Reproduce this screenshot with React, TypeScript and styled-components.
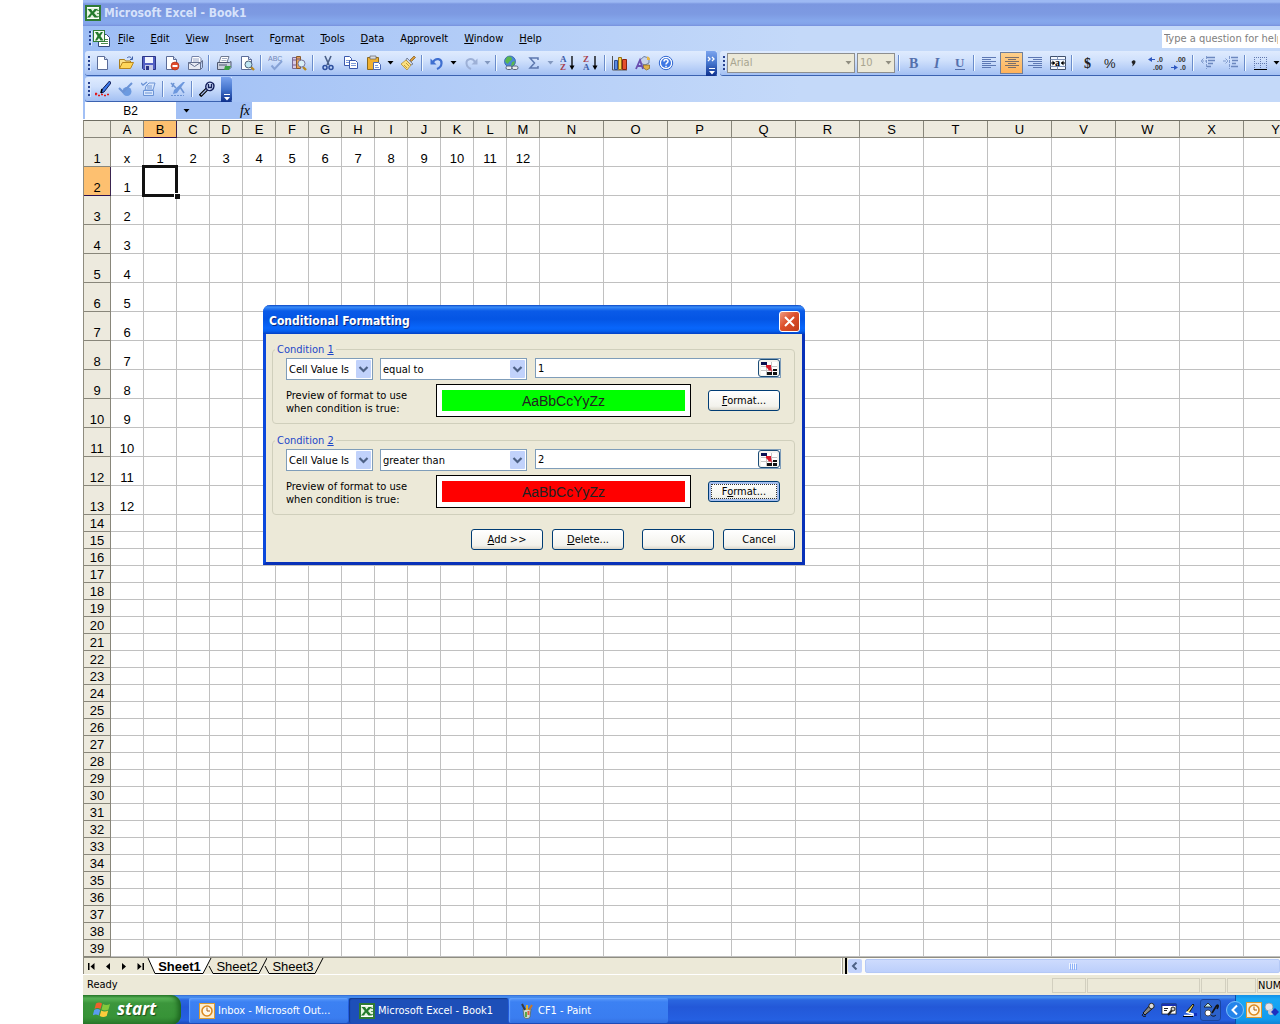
import React from "react";
import styled, { createGlobalStyle, css } from "styled-components";

const ui = `"DejaVu Sans Condensed", "Noto Sans", sans-serif`;
const arial = `"Liberation Sans", Arial, sans-serif`;

const Global = createGlobalStyle`
  *, *::before, *::after { box-sizing: border-box; }
  body { margin: 0; background: #fff; overflow: hidden; }
  button, input, select { font: inherit; color: inherit; margin: 0; border-radius: 0; }
  svg { display: block; flex: none; }
`;

const Desktop = styled.div`
  padding-left: 83px;
  overflow: hidden;
  font: 11px/14px ${ui};
  color: #000;
`;
const Win = styled.main`
  position: relative;
  display: flex;
  flex-direction: column;
`;
const TitleBar = styled.header`
  display: flex;
  align-items: center;
  gap: 3px;
  height: 26px;
  padding: 0 2px;
  background: linear-gradient(#9db9f3 0, #9db9f3 2px, #7b97e0 4px, #7d9ae2 14px, #86a8ec 21px, #83a3ea 24px, #7790dc 26px);
  color: #d6e2fb;
  font-weight: 700;
  font-size: 12px;
`;
const Bars = styled.div`
  background: linear-gradient(90deg, #9ebef5, #c4d9f9 60%);
`;
const MenuBar = styled.nav`
  display: flex;
  align-items: center;
  height: 25px;
  padding-left: 3px;
`;
const MenuItems = styled.div`
  display: flex;
  flex: 1;
`;
const MenuButton = styled.button`
  border: 0;
  background: none;
  padding: 0 8px;
  height: 22px;
  white-space: nowrap;
`;
const HelpBox = styled.input`
  width: 118px;
  height: 18px;
  border: 0;
  padding: 0 2px;
  background: #fff;
  &::placeholder { color: #808080; opacity: 1; }
`;
const Grip = styled.span`
  flex: none;
  width: 3px;
  height: 15px;
  margin: 0 0 0 3px;
  background: repeating-linear-gradient(#27418f 0 2px, transparent 2px 4px);
  border-right: 1px solid #d8e6fc;
`;
const BarRow = styled.div`
  display: flex;
  gap: 3px;
  height: 25px;
  padding-left: 2px;
  & + & { margin-top: 1px; }
`;
const Toolbar = styled.div<{ $w?: number }>`
  display: flex;
  flex: ${(p) => (p.$w ? `none` : `1 0 auto`)};
  width: ${(p) => (p.$w ? `${p.$w}px` : `auto`)};
  align-items: center;
  border-radius: 3px 0 0 3px;
  border-bottom: 1px solid #3b62b0;
  background: linear-gradient(#dfebfe, #cfe0fc 40%, #a3c0f3);
`;
const Tool = styled.button<{ $on?: boolean }>`
  display: flex;
  flex: none;
  align-items: center;
  justify-content: center;
  width: 23px;
  height: 22px;
  padding: 0;
  border: 1px solid ${(p) => (p.$on ? "#6f7f9c" : "transparent")};
  background: ${(p) => (p.$on ? "linear-gradient(#fdd08b, #ffb25a)" : "none")};
`;
const Drop = styled(Tool)`
  width: 11px;
`;
const Sep = styled.span`
  flex: none;
  width: 2px;
  height: 16px;
  margin: 0 2px;
  background: linear-gradient(90deg, #6a8ccb 50%, #f1f9ff 50%);
`;
const More = styled.button`
  display: flex;
  align-items: flex-end;
  justify-content: center;
  width: 11px;
  height: 25px;
  margin: 0 0 -1px auto;
  padding: 0;
  border: 0;
  border-radius: 0 3px 3px 0;
  background: linear-gradient(#7aa3ee, #4373cc 50%, #0d2f8c);
`;
const Combo = styled.div<{ $w: number }>`
  display: grid;
  flex: none;
  align-items: center;
  width: ${(p) => p.$w}px;
  margin: 0 1px;
  & > * { grid-area: 1 / 1; }
  & > svg { justify-self: end; margin-right: 3px; pointer-events: none; }
`;
const GreySelect = styled.select`
  appearance: none;
  width: 100%;
  height: 20px;
  padding: 0 2px;
  border: 1px solid #8e8f8f;
  background: #ece9d8;
  color: #a8a590;
  opacity: 1;
`;
const FormulaBar = styled.div`
  display: flex;
  align-items: center;
  height: 17px;
  padding-left: 2px;
  background: #a2c0f5;
`;
const NameBox = styled.input`
  width: 91px;
  height: 17px;
  border: 0;
  padding: 0;
  text-align: center;
  background: #fff;
  font: 12px/16px ${arial};
`;
const NameDrop = styled.button`
  display: flex;
  width: 20px;
  padding: 0;
  border: 0;
  background: none;
  justify-content: center;
`;
const Fx = styled.button`
  width: 56px;
  padding: 0 2px 0 0;
  border: 0;
  background: none;
  text-align: right;
  font: italic 400 14px/15px "Liberation Serif", serif;
`;
const FormulaInput = styled.input`
  flex: 1;
  min-width: 0;
  height: 17px;
  border: 0;
  background: #fff;
`;

/* ---- sheet ---- */
const SheetArea = styled.div`
  overflow: hidden;
  border-left: 1px solid #8f8c7f;
  border-top: 1px solid #6f6d62;
  margin-top: 1px;
`;
const Grid = styled.table`
  table-layout: fixed;
  width: 1224px;
  border-collapse: separate;
  border-spacing: 0;
  font: 13px/15px ${arial};
`;
const Head = styled.th<{ $hot?: boolean }>`
  height: 17px;
  padding: 0;
  font-weight: 400;
  background: ${(p) => (p.$hot ? "#fdc070" : "#edeade")};
  border-right: 1px solid ${(p) => (p.$hot ? "#3a2450" : "#88867a")};
  border-bottom: 1px solid ${(p) => (p.$hot ? "#2a1050" : "#88867a")};
`;
const RowHead = styled(Head)<{ $tall?: boolean }>`
  height: ${(p) => (p.$tall ? 29 : 17)}px;
  vertical-align: bottom;
`;
const Cell = styled.td<{ $active?: boolean }>`
  padding: 0;
  text-align: center;
  vertical-align: bottom;
  border-right: 1px solid #c0c0c0;
  border-bottom: 1px solid #c0c0c0;
  ${(p) =>
    p.$active &&
    css`
      position: relative;
      &::before {
        content: "";
        position: absolute;
        inset: -2px;
        border: 3px double #111;
        background: linear-gradient(#444, #444) border-box;
        background-clip: border-box;
        border-style: solid;
        background: none;
      }
      &::after {
        content: "";
        position: absolute;
        right: -4px;
        bottom: -4px;
        width: 6px;
        height: 6px;
        background: #111;
        border-left: 1px solid #fff;
        border-top: 1px solid #fff;
      }
    `}
`;

const SheetBar = styled.div`
  display: flex;
  height: 18px;
  border-top: 1px solid #8f8d81;
  border-bottom: 1px solid #fff;
  background: #ece9d8;
`;
const TabsPane = styled.div`
  display: flex;
  flex: none;
  width: 759px;
  align-items: center;
  border-left: 1px solid #8f8c7f;
  border-right: 1px solid #fff;
`;
const NavButton = styled.button`
  display: flex;
  justify-content: center;
  width: 16px;
  padding: 0;
  border: 0;
  background: none;
`;
const Tabs = styled.div`
  display: flex;
  margin-left: 5px;
`;
const Tab = styled.button<{ $on?: boolean }>`
  height: 16px;
  margin-left: -6px;
  width: ${(p) => (p.$on ? 65 : 62)}px;
  padding: 0;
  border: 0;
  display: grid;
  align-items: center;
  justify-items: center;
  background: none;
  font: ${(p) => (p.$on ? 700 : 400)} 13px/15px ${arial};
  position: relative;
  z-index: ${(p) => (p.$on ? 1 : 0)};
  & > * { grid-area: 1 / 1; }
  & > svg { justify-self: stretch; }
  & > span { z-index: 1; }
`;
const Splitter = styled.span`
  flex: none;
  width: 5px;
  border-left: 1px solid #a09e90;
  border-right: 2px solid #000;
  margin-right: 1px;
`;
const ScrollTrack = styled.div`
  display: flex;
  flex: 1;
  gap: 3px;
  min-width: 0;
  padding: 1px 0;
  background: #fbfbf8;
`;
const ScrollButton = styled.button`
  display: flex;
  flex: none;
  align-items: center;
  justify-content: center;
  width: 14px;
  height: 14px;
  padding: 0;
  border: 0;
  border-radius: 2px;
  background: #c3d3fb;
`;
const Thumb = styled.div`
  display: flex;
  flex: 1;
  align-items: center;
  justify-content: center;
  border: 1px solid #b4c8f6;
  border-radius: 2px;
  background: linear-gradient(#cddbfd, #bccffb);
`;
const StatusBar = styled.footer`
  display: flex;
  align-items: center;
  height: 20px;
  padding-left: 4px;
  background: #ece9d8;
`;
const Ready = styled.span`
  flex: 1;
`;
const StatusBox = styled.span<{ $w: number }>`
  flex: none;
  width: ${(p) => p.$w}px;
  height: 15px;
  margin-right: 1px;
  border: 1px solid #d2cfbf;
  white-space: nowrap;
  &:last-child { margin-right: 0; border-width: 1px 0 1px 1px; }
`;

const TaskBar = styled.div`
  display: flex;
  align-items: stretch;
  height: 30px;
  background: linear-gradient(#3168d5 0, #4b93f0 2px, #2a66e0 5px, #2358d8 12px, #2560e2 25px, #1941a5 30px);
  color: #fff;
`;
const Start = styled.button`
  display: flex;
  align-items: center;
  gap: 5px;
  width: 98px;
  margin-right: 8px;
  padding: 0 0 2px 10px;
  border: 0;
  border-radius: 0 10px 10px 0;
  background: linear-gradient(#2f8a33, #5cb85a 3px, #3c963c 8px, #379337 22px, #2b7a2d);
  box-shadow: inset -3px 0 5px #1d641f;
  font: italic 700 17px/20px "Open Sans", sans-serif;
  color: #fff;
  text-shadow: 1px 1px 1px #1c4f1c;
`;
const Task = styled.button<{ $on?: boolean }>`
  display: flex;
  align-items: center;
  gap: 3px;
  width: 159px;
  height: 25px;
  margin: 3px 1px 0 0;
  padding: 0 10px;
  border: 0;
  border-radius: 2px;
  color: #fff;
  white-space: nowrap;
  background: ${(p) => (p.$on ? "#1d4fb8" : "linear-gradient(#5a9bfb, #3c81f3 4px, #3a7df0 20px, #3370e0)")};
  box-shadow: inset 1px 1px 1px ${(p) => (p.$on ? "#123a90" : "#63a0fb")};
`;
const Lang = styled.div`
  display: flex;
  align-items: center;
  margin-left: auto;
`;
const LangButton = styled.button<{ $on?: boolean }>`
  display: flex;
  align-items: center;
  justify-content: center;
  width: 21px;
  height: 22px;
  padding: 0;
  border: ${(p) => (p.$on ? "1px solid #1a45a0" : "0")};
  border-radius: 3px;
  background: ${(p) => (p.$on ? "#2c62cc" : "none")};
`;
const Tray = styled.div`
  display: flex;
  align-items: center;
  gap: 2px;
  width: 45px;
  margin-left: 14px;
  background: linear-gradient(#1290e8, #19a8f5 4px, #129bee 24px, #0f7fd0);
  border-left: 1px solid #0a4ea8;
`;
const TrayButton = styled.button`
  display: flex;
  flex: none;
  padding: 0;
  border: 0;
  background: none;
  &:first-child { margin-left: -10px; }
`;

/* ---- dialog ---- */
const Dialog = styled.section`
  position: absolute;
  left: 180px;
  top: 305px;
  width: 542px;
  border: 3px solid #0a48dc;
  border-top: 0;
  border-right-color: #0831b8;
  border-bottom-color: #0831b8;
  border-radius: 7px 7px 0 0;
  background: #ece9d8;
`;
const DialogTitle = styled.div`
  display: flex;
  align-items: center;
  justify-content: space-between;
  height: 29px;
  margin: 0 -3px;
  padding: 3px 5px 0 6px;
  border-radius: 7px 7px 0 0;
  background: linear-gradient(#0a45c4 0, #3a8cf8 2px, #0a5be8 6px, #0455e4 14px, #0866fb 23px, #0560f0 26px, #0340c4 29px);
  color: #fff;
  font: 700 12px/16px ${ui};
  text-shadow: 1px 1px 0 #0a2a80;
`;
const Close = styled.button`
  display: flex;
  align-items: center;
  justify-content: center;
  width: 21px;
  height: 21px;
  padding: 0;
  border: 1px solid #fff;
  border-radius: 3px;
  background: linear-gradient(135deg, #ee9a80, #dd4f2c 45%, #c03c18);
`;
const DialogBody = styled.form`
  display: flex;
  flex-direction: column;
  gap: 9px;
  padding: 8px 7px 12px 6px;
`;
const Group = styled.fieldset`
  min-width: 0;
  height: 82px;
  margin: 0;
  padding: 0 13px 0 13px;
  border: 1px solid #d0cfbc;
  border-radius: 4px;
`;
const Legend = styled.legend`
  margin-left: -11px;
  padding: 1px 2px 0;
  height: 14px;
  color: #1c46c8;
`;
const Line = styled.div`
  display: flex;
  align-items: flex-start;
  padding-top: 2px;
`;
const PickWrap = styled.div<{ $w: number }>`
  display: grid;
  flex: none;
  width: ${(p) => p.$w}px;
  margin-right: 7px;
  align-items: center;
  & > * { grid-area: 1 / 1; }
  & > svg { justify-self: end; margin-right: 2px; pointer-events: none; }
`;
const Pick = styled.select`
  appearance: none;
  width: 100%;
  height: 22px;
  padding: 2px 2px 0;
  border: 1px solid #7f9db9;
  background: #fff;
`;
const RefWrap = styled.div`
  display: flex;
  flex: 1;
  height: 20px;
  margin-left: 1px;
  border: 1px solid #7f9db9;
  background: #fff;
`;
const RefInput = styled.input`
  flex: 1;
  min-width: 0;
  border: 0;
  padding: 2px 2px 0;
  background: none;
  outline: 0;
`;
const RefButton = styled.button`
  display: flex;
  align-items: center;
  justify-content: center;
  width: 22px;
  height: 18px;
  padding: 0;
  border: 1px solid #1c4d78;
  border-radius: 3px;
  background: #f4f3ee;
`;
const PreviewLine = styled.div`
  display: flex;
  align-items: center;
  padding-top: 4px;
`;
const PreviewLabel = styled.p`
  width: 150px;
  margin: 0;
  padding-top: 2px;
  line-height: 13px;
`;
const PreviewBox = styled.div`
  width: 255px;
  height: 33px;
  padding: 5px;
  border: 1px solid #000;
  background: #fff;
`;
const Swatch = styled.div<{ $c: string }>`
  height: 21px;
  text-align: center;
  background: ${(p) => p.$c};
  color: #222;
  font: 14px/22px ${arial};
`;
const Push = styled.button<{ $focus?: boolean }>`
  width: 72px;
  height: 21px;
  padding: 1px 0 0;
  border: 1px solid #003c74;
  border-radius: 3px;
  background: linear-gradient(#fff, #f3f2ec 80%, #dcd8cc);
  ${(p) =>
    p.$focus &&
    css`
      box-shadow: inset 0 0 0 2px #a4bdee;
      outline: 1px dotted #333;
      outline-offset: -4px;
    `}
`;
const PushRight = styled(Push)`
  margin: 0 1px 0 auto;
`;
const Actions = styled.div`
  display: flex;
  justify-content: flex-end;
  gap: 9px;
  padding-top: 5px;
`;
const Confirm = styled(Push)`
  margin-left: 9px;
`;

/* ---- icons ---- */
const I = ({ children, w = 16, h = 16 }: { children: React.ReactNode; w?: number; h?: number }) => (
  <svg width={w} height={h} viewBox={`0 0 ${w} ${h}`} aria-hidden="true">{children}</svg>
);
const Down = ({ c = "#000" }: { c?: string }) => <I w={7} h={4}><path d="M0.500 0h6L3.500 3.500z" fill={c} /></I>;

const ExcelIcon = () => (
  <I>
    <rect x="1" y="1" width="14" height="14" fill="#fff" stroke="#2f7a35" strokeWidth="2" />
    <path d="M10 3h4v10h-4z" fill="#dff0dc" /><path d="M11 5.500h3M11 8.500h3M11 11.500h3" stroke="#5a9a5a" />
    <path d="M2 3h10v10H2z" fill="#e6f4e2" />
    <path d="M2.500 4h3.500l1.500 2.500L9.500 4H13L9 8l4 4.500H9.500L7 9.500 5 12.500H2L5.800 8z" fill="#237a2c" />
  </I>
);
const DocExcel = () => (
  <I w={18} h={17}>
    <path d="M6.500 4.500h8l3 3v9h-11z" fill="#fff" stroke="#33487c" />
    <path d="M12 9.500h4M12 11.500h4M9 13.500h7" stroke="#4c8b4c" />
    <rect x="1.500" y=".5" width="11" height="11" fill="#f2faef" stroke="#2f7a35" />
    <path d="M3 2h3l1 2 2-2h2L8.500 6l3 4.500h-3L7 8l-2 2.500H3L5.500 6z" fill="#237a2c" />
  </I>
);
const page = <path d="M2.500 1.500h7l3 3v10h-10z" fill="#fff" stroke="#5b6c98" />;
const fold = <path d="M9.500 1.500v3h3" fill="#d5e0f5" stroke="#5b6c98" />;
const lens = (
  <>
    <path d="M12 12l3 3" stroke="#b88a20" strokeWidth="2.400" />
    <circle cx="9.500" cy="9.500" r="3.500" fill="#bfe6f2" stroke="#4c5f74" />
  </>
);

const icons: Record<string, React.ReactNode> = {
  New: <I>{page}{fold}</I>,
  Open: <I><path d="M1.500 13.500v-9h5l1 1.500h5v2" fill="#fbe08a" stroke="#a97d1c" /><path d="M1.500 13.500l3-6h11l-3 6z" fill="#ffd65a" stroke="#b8861f" /><path d="M9 3c2-2 4-1 5 1M14.500 1.500V4.500H12" fill="none" stroke="#3c5fa8" /></I>,
  Save: <I><path d="M1.500 1.500h13v13h-12l-1-1z" fill="#5360c4" stroke="#2b3688" /><path d="M4 2h8v6H4z" fill="#f2f5ff" /><path d="M4 10h8v5H4z" fill="#c7cbe8" /><path d="M5 11h3v4H5z" fill="#2b3688" /></I>,
  Permission: <I>{page}{fold}<circle cx="11" cy="11" r="4" fill="#df4a2c" stroke="#a8280f" strokeWidth=".6" /><path d="M8.500 11h5" stroke="#fff" strokeWidth="2" /></I>,
  "E-mail": <I><path d="M5 1.500h7l2 2v5H4z" fill="#fff" stroke="#7482a8" /><path d="M6 4h6M6 6h6" stroke="#9aa7c8" /><path d="M1.500 7.500h12v7h-12z" fill="#e8ebf3" stroke="#64708f" /><path d="M1.500 7.500l6 4 6-4M13.500 7.500l2-2v7l-2 2" fill="none" stroke="#64708f" /></I>,
  Print: <I><path d="M5 1.500h8l-2 6H3z" fill="#fff" stroke="#6f7a90" /><path d="M1.500 7.500h12l1.500-1v6l-2 2H1.500z" fill="#c9cfdc" stroke="#4e5870" /><path d="M6 3.500h5M5.500 5.500h5" stroke="#a5afc4" /><path d="M3 10h8" stroke="#4e5870" /><path d="M9 11h6l-2 4H8z" fill="#3ca044" /></I>,
  "Print Preview": <I>{page}{fold}{lens}</I>,
  Spelling: <I><text x="0" y="6" fontSize="7" fontFamily="Liberation Sans" fill="#6f86b8">ABC</text><path d="M3.500 10.500l3 3.500L14 6" fill="none" stroke="#86a2d6" strokeWidth="2" /></I>,
  Research: <I><path d="M1.500 2.500h4v11h-4z" fill="#d8c9e4" stroke="#786a95" /><path d="M5.500 1.500h4v12h-4z" fill="#e7a05a" stroke="#8a5a2c" /><path d="M2 5h3M2 10h3M6 4h3" stroke="#705a90" /><path d="M12 12l3 3" stroke="#b88a20" strokeWidth="2.400" /><circle cx="10.500" cy="8.500" r="3.500" fill="#d9eef6" stroke="#76749a" /></I>,
  Cut: <I><path d="M5 1l4 9M11 1L7 10" stroke="#4a5f86" strokeWidth="1.600" fill="none" /><circle cx="5" cy="12.500" r="2" fill="none" stroke="#2d4f9e" strokeWidth="1.500" /><circle cx="11" cy="12.500" r="2" fill="none" stroke="#2d4f9e" strokeWidth="1.500" /></I>,
  Copy: <I><path d="M1.500 1.500h5l2 2v7h-7z" fill="#fff" stroke="#3a58ac" /><path d="M3 5.500h4M3 7.500h4" stroke="#7e9ad8" /><path d="M6.500 5.500h6l2 2v6h-8z" fill="#fff" stroke="#3a58ac" /><path d="M8 8.500h5M8 10.500h5" stroke="#7e9ad8" /></I>,
  Paste: <I><path d="M1.500 2.500h11v12h-11z" fill="#f0b030" stroke="#8c6a20" /><path d="M4 1h6v3H4z" fill="#d8dbe2" stroke="#666" strokeWidth=".7" /><path d="M7.500 7.500h5l2 2v5h-7z" fill="#fff" stroke="#4a68b4" /><path d="M9 10.500h3M9 12.500h4" stroke="#7e9ad8" /></I>,
  "Format Painter": <I><path d="M10 5l4-4 1.500 1.500-4 4z" fill="#d99b3a" stroke="#805a20" strokeWidth=".7" /><path d="M7 3l6 6-2 1-5-5z" fill="#cfd5e2" stroke="#56617a" strokeWidth=".7" /><path d="M6 5l5 5-4 5-6-6z" fill="#fce07e" stroke="#a98427" strokeWidth=".7" /><path d="M4 10l3 3M6 8l3 3" stroke="#c09a3a" /></I>,
  Undo: <I><path d="M4 7c3-5 9-3 8.500 1.500C12.300 11 10.500 13 8 14" fill="none" stroke="#3f6fd0" strokeWidth="2.200" /><path d="M1.500 3.500v6h6z" fill="#3f6fd0" /></I>,
  Redo: <I><path d="M12 7c-3-5-9-3-8.500 1.500C3.700 11 5.500 13 8 14" fill="none" stroke="#9db0d6" strokeWidth="2" /><path d="M14.500 3.500v6h-6z" fill="#9db0d6" /></I>,
  Hyperlink: <I><circle cx="7" cy="6.500" r="5.500" fill="#4a86d8" stroke="#2a5a9c" strokeWidth=".7" /><path d="M4 2c3-1 5 0 5 2S6 6 5.500 8 3 8 2 6zM9 7l3-1-1 4-3 1z" fill="#59b84e" /><rect x="3" y="11" width="6" height="3.500" rx="1.700" fill="#e8ecf2" stroke="#58657c" /><rect x="9" y="11" width="6" height="3.500" rx="1.700" fill="#e8ecf2" stroke="#58657c" /></I>,
  AutoSum: <I><path d="M12 5V3H4l4.500 5L4 13h8v-2" fill="none" stroke="#5d78ae" strokeWidth="1.500" /></I>,
  "Sort Ascending": <I><text x="0" y="7" fontSize="9" fontWeight="700" fontFamily="Liberation Serif" fill="#3c5ca8">A</text><text x="0" y="15" fontSize="9" fontWeight="700" fontFamily="Liberation Serif" fill="#a8404c">Z</text><path d="M12 1v12" stroke="#000" strokeWidth="1.300" /><path d="M9.500 10.500h5L12 15z" /></I>,
  "Sort Descending": <I><text x="0" y="7" fontSize="9" fontWeight="700" fontFamily="Liberation Serif" fill="#a8404c">Z</text><text x="0" y="15" fontSize="9" fontWeight="700" fontFamily="Liberation Serif" fill="#3c5ca8">A</text><path d="M12 1v12" stroke="#000" strokeWidth="1.300" /><path d="M9.500 10.500h5L12 15z" /></I>,
  "Chart Wizard": <I><path d="M.5 1v14H15" fill="none" stroke="#555" /><path d="M2.500 5.500h3v9h-3z" fill="#5b8be0" stroke="#2c4c94" /><path d="M6.500 2.500h3v12h-3z" fill="#fbd34c" stroke="#94701a" /><path d="M10.500 4.500h4v10h-4z" fill="#e4502c" stroke="#8a2410" /></I>,
  Drawing: <I><path d="M5 5l4-3.500L14 3v5l-4 2-5-2z" fill="#c6d2ea" stroke="#57688e" strokeWidth=".8" /><path d="M12 1.500c2 0 3 1.500 3 3.500h-3z" fill="#e8b944" /><path d="M8.500 10h6v3.500l-3 1.500-3-2z" fill="#e0b048" stroke="#856215" strokeWidth=".7" /><path d="M1 14L5 5l3 9M2.500 11H7" fill="none" stroke="#6a4fb0" strokeWidth="1.800" /></I>,
  Help: <I><circle cx="8" cy="8" r="6.700" fill="#fff" stroke="#2f66d0" /><circle cx="8" cy="8" r="5" fill="#3f78e4" /><path d="M6 6.500C6 4 10 4 10 6.300 10 8 8 7.800 8 9.500M8 10.800v1.400" fill="none" stroke="#fff" strokeWidth="1.500" /></I>,
  Bold: <I><text x="3" y="13" fontSize="14" fontWeight="700" fontFamily="Liberation Serif" fill="#5470ac">B</text></I>,
  Italic: <I><text x="5" y="13" fontSize="14" fontStyle="italic" fontWeight="700" fontFamily="Liberation Serif" fill="#5470ac">I</text></I>,
  Underline: <I><text x="3" y="12" fontSize="13" fontWeight="700" fontFamily="Liberation Serif" fill="#5470ac">U</text><path d="M3 14.500h10" stroke="#5470ac" /></I>,
  "Align Left": <I><path d="M1 2.500h14M1 4.500h9M1 6.500h14M1 8.500h9M1 10.500h14M1 12.500h9" stroke="#5d78b4" /></I>,
  Center: <I><path d="M1 2.500h14M4 4.500h8M1 6.500h14M4 8.500h8M1 10.500h14M4 12.500h8" stroke="#7b6f6b" /></I>,
  "Align Right": <I><path d="M1 2.500h14M6 4.500h9M1 6.500h14M6 8.500h9M1 10.500h14M6 12.500h9" stroke="#5d78b4" /></I>,
  "Merge and Center": <I><path d="M.5 1.500h15v13H.5z" fill="#f4f8ff" stroke="#40506c" /><path d="M.5 4.500h15M.5 11.500h15M7.500 1.500v3M7.500 11.500v3" stroke="#8093b8" /><path d="M1 8h4M11 8h4" stroke="#000" /><path d="M2.500 5.500L5 8l-2.500 2.500zM13.500 5.500L11 8l2.500 2.500z" /><text x="5" y="11" fontSize="10" fontWeight="700" fontFamily="Liberation Serif">a</text></I>,
  Currency: <I><text x="5" y="13" fontSize="14" fontWeight="700" fontFamily="Liberation Serif" fill="#222">$</text></I>,
  Percent: <I><text x="2" y="13" fontSize="13" fontFamily="Liberation Sans" fill="#222">%</text></I>,
  Comma: <I><path d="M8 5.500c3-1 4 3-1 6 1-2 1-2.500 0-3.500s0-2.200 1-2.500z" fill="#222" /></I>,
  "Increase Decimal": <I><text x="9" y="7" fontSize="7" fontWeight="700" fontFamily="Liberation Sans" fill="#333">.0</text><text x="5" y="15" fontSize="7" fontWeight="700" fontFamily="Liberation Sans" fill="#333">.00</text><path d="M2 4.500h5" stroke="#2f58c0" /><path d="M0 4.500L4 2v5z" fill="#2f58c0" /></I>,
  "Decrease Decimal": <I><text x="5" y="7" fontSize="7" fontWeight="700" fontFamily="Liberation Sans" fill="#333">.00</text><text x="9" y="15" fontSize="7" fontWeight="700" fontFamily="Liberation Sans" fill="#333">.0</text><path d="M0 12.500h5" stroke="#2f58c0" /><path d="M7 12.500L3 10v5z" fill="#2f58c0" /></I>,
  "Decrease Indent": <I><path d="M7 2.500h8M8 5.500h7M8 8.500h5M7 11.500h4" stroke="#6c88bf" strokeWidth="1.500" /><path d="M1 6h5M3.500 3.500L1 6l2.500 2.500M6.500 1v13" stroke="#7f99cc" fill="none" strokeDasharray="3 1" /></I>,
  "Increase Indent": <I><path d="M8 2.500h7M9 5.500h6M9 8.500h4M8 11.500h7" stroke="#6c88bf" strokeWidth="1.500" /><path d="M0 6h5M2.500 3.500L5 6 2.500 8.500M6.500 1v13" stroke="#7f99cc" fill="none" strokeDasharray="3 1" /></I>,
  Borders: <I><path d="M2.500 2v11M8.500 2v11M14.500 2v11M2 2.500h13M2 8.500h13" stroke="#6279ad" strokeDasharray="1 1" /><path d="M2 14.500h13" stroke="#000" /></I>,
  Sign: <I><path d="M14.500 0l1.500 2-7 9-3 1 1-3.500z" fill="#3b78e8" stroke="#101c58" /><path d="M6 12l1-4" stroke="#000" strokeWidth="1.600" /><path d="M0 12l2 2M2 12l-2 2M3 14.500h2m1-1h2m1 1h2m1-1h2" stroke="#e01818" strokeWidth="1.300" /></I>,
  Approve: <I><circle cx="9" cy="10.500" r="4.500" fill="#6c9ae0" /><path d="M1 7l4 4 9-9" fill="none" stroke="#6c94d6" strokeWidth="2" /></I>,
  "Approve List": <I><path d="M5 5l3-3h6l-2 7H4zM2.500 9.500h10v5h-10zM6 5h5M6 7h5M4 12h7" fill="#d8e6fc" stroke="#6c94d6" /><path d="M0 2l2 2 4-3" fill="none" stroke="#6c94d6" strokeWidth="1.400" /></I>,
  "Remove Signature": <I><path d="M15 1L7 12l-4 1 1-4L13 1z" fill="#6d98de" /><path d="M1 2l5 5M4 2l-2 4M10 6l4 6" stroke="#6d94d4" strokeWidth="1.600" /><path d="M1 14.500h13" stroke="#6d94d4" strokeDasharray="2 1" /></I>,
  Setup: <I><path d="M1 15l7-7" stroke="#000" strokeWidth="3.400" /><path d="M2 14l6-6" stroke="#9fb6e8" strokeWidth="1.200" /><path d="M8 2.500C10 0 15 1 15 5s-4 5.500-6.500 4S6.500 4 8 2.500zM9.500 3v3.500h3V3" fill="#cfdcfa" stroke="#14205c" strokeWidth="1.400" /></I>,
};

const standard = ["New", "Open", "Save", "Permission", "E-mail", "|", "Print", "Print Preview", "|", "Spelling", "Research", "|", "Cut", "Copy", "Paste", "v", "Format Painter", "|", "Undo", "v", "Redo", "x", "|", "Hyperlink", "AutoSum", "x", "Sort Ascending", "Sort Descending", "|", "Chart Wizard", "Drawing", "Help"];
const formatting = ["|", "Bold", "Italic", "Underline", "|", "Align Left", "Center", "Align Right", "Merge and Center", "|", "Currency", "Percent", "Comma", "Increase Decimal", "Decrease Decimal", "|", "Decrease Indent", "Increase Indent", "|", "Borders", "v"];
const approve = ["Sign", "Approve", "Approve List", "|", "Remove Signature", "|", "Setup"];

const Tools = ({ items }: { items: string[] }) => (
  <>
    {items.map((n, i) =>
      n === "|" ? <Sep key={i} /> :
      n === "v" || n === "x" ? <Drop key={i} aria-label={`${items[i - 1]} options`}><Down c={n === "v" ? "#000" : "#8398bf"} /></Drop> :
      <Tool key={i} aria-label={n} $on={n === "Center"}>{icons[n]}</Tool>
    )}
  </>
);

const MoreIcon = ({ chevrons }: { chevrons?: boolean }) => (
  <I w={9} h={21}>
    {chevrons && <path d="M1 2l2 2-2 2M5 2l2 2-2 2" fill="none" stroke="#fff" strokeWidth="1.300" />}
    <path d="M2 13.500h6" stroke="#fff" /><path d="M2 16h6l-3 3.500z" fill="#fff" />
  </I>
);

const menus = [["", "F", "ile"], ["", "E", "dit"], ["", "V", "iew"], ["", "I", "nsert"], ["F", "o", "rmat"], ["", "T", "ools"], ["", "D", "ata"], ["A", "p", "proveIt"], ["", "W", "indow"], ["", "H", "elp"]];
const columns = "ABCDEFGHIJKLMNOPQRSTUVWXY".split("");
const rows = Array.from({ length: 39 }, (_, i) => i + 1);

const cellText = (row: number, col: number) => {
  if (row === 1 && col === 0) return "x";
  if (row === 1 && col <= 12) return String(col);
  if (col === 0 && row >= 2 && row <= 13) return String(row - 1);
  return null;
};

const PickArrow = () => (
  <I w={15} h={18}>
    <rect width="15" height="18" rx="1" fill="#c1d2fb" /><path d="M3.500 7l4 4 4-4" fill="none" stroke="#4d6185" strokeWidth="2.200" />
  </I>
);

const RefIcon = () => (
  <I w={16} h={13}>
    <rect width="16" height="13" fill="#fff" /><path d="M0 4.500h16M0 8.500h16M5.500 0v13M10.500 0v13" stroke="#c4c4c4" />
    <path d="M0 0h6v3H0z" fill="#0a1050" /><path d="M6 10h5v3H6zM12 7h4v2h-4zM12 10h4v3h-4z" fill="#111" />
    <path d="M5 3h5v1.500l1 5.500-2-2-1 1-1-2-2-2z" fill="#d81a2c" />
  </I>
);

function Condition({ n, op, value, color, focus }: { n: number; op: string; value: string; color: string; focus?: boolean }) {
  return (
    <Group>
      <Legend>Condition <u>{n}</u></Legend>
      <Line>
        <PickWrap $w={87}>
          <Pick aria-label={`Condition ${n} source`}><option>Cell Value Is</option></Pick>
          <PickArrow />
        </PickWrap>
        <PickWrap $w={147}>
          <Pick aria-label={`Condition ${n} comparison`}><option>{op}</option></Pick>
          <PickArrow />
        </PickWrap>
        <RefWrap>
          <RefInput aria-label={`Condition ${n} value`} defaultValue={value} />
          <RefButton type="button" aria-label="Collapse dialog"><RefIcon /></RefButton>
        </RefWrap>
      </Line>
      <PreviewLine>
        <PreviewLabel>Preview of format to use<br />when condition is true:</PreviewLabel>
        <PreviewBox><Swatch $c={color}>AaBbCcYyZz</Swatch></PreviewBox>
        <PushRight type="button" $focus={focus}>{focus ? <>F<u>o</u>rmat...</> : <><u>F</u>ormat...</>}</PushRight>
      </PreviewLine>
    </Group>
  );
}

const tabs = ["Sheet1", "Sheet2", "Sheet3"];

const Clock = () => (
  <I><rect x=".5" y=".5" width="15" height="15" fill="#fdeccb" stroke="#d89a34" /><circle cx="8" cy="8" r="5" fill="#fff8e8" stroke="#dc8a20" strokeWidth="1.600" /><path d="M8 4.500V8h3" fill="none" stroke="#a85a10" /></I>
);

export default function App() {
  return (
    <Desktop>
      <Global />
      <Win>
        <TitleBar><ExcelIcon />Microsoft Excel - Book1</TitleBar>
        <Bars>
          <MenuBar>
            <Grip />
            <DocExcel />
            <MenuItems>
              {menus.map(([a, b, c]) => <MenuButton key={a + b + c}>{a}<u>{b}</u>{c}</MenuButton>)}
            </MenuItems>
            <HelpBox aria-label="Type a question for help" placeholder="Type a question for help" />
          </MenuBar>
          <BarRow>
            <Toolbar $w={632}>
              <Grip />
              <Tools items={standard} />
              <More aria-label="Toolbar options"><MoreIcon chevrons /></More>
            </Toolbar>
            <Toolbar>
              <Grip />
              <Combo $w={128}><GreySelect disabled aria-label="Font"><option>Arial</option></GreySelect><Down c="#908e80" /></Combo>
              <Combo $w={38}><GreySelect disabled aria-label="Font size"><option>10</option></GreySelect><Down c="#908e80" /></Combo>
              <Tools items={formatting} />
            </Toolbar>
          </BarRow>
          <BarRow>
            <Toolbar $w={147}>
              <Grip />
              <Tools items={approve} />
              <More aria-label="Toolbar options"><MoreIcon /></More>
            </Toolbar>
          </BarRow>
        </Bars>
        <FormulaBar>
          <NameBox aria-label="Name box" defaultValue="B2" />
          <NameDrop aria-label="Names"><Down /></NameDrop>
          <Fx>fx</Fx>
          <FormulaInput aria-label="Formula" />
        </FormulaBar>
        <SheetArea>
          <Grid>
            <colgroup>
              <col style={{ width: 27 }} />
              {columns.map((c, i) => <col key={c} style={{ width: i < 13 ? 33 : 64 }} />)}
            </colgroup>
            <thead>
              <tr><Head />{columns.map((c) => <Head key={c} scope="col" $hot={c === "B"}>{c}</Head>)}</tr>
            </thead>
            <tbody>
              {rows.map((r) => (
                <tr key={r}>
                  <RowHead scope="row" $hot={r === 2} $tall={r <= 13}>{r}</RowHead>
                  {columns.map((c, i) => <Cell key={c} $active={r === 2 && c === "B"}>{cellText(r, i)}</Cell>)}
                </tr>
              ))}
            </tbody>
          </Grid>
        </SheetArea>
        <SheetBar>
          <TabsPane>
            <NavButton aria-label="First sheet"><I w={8} h={7}><path d="M0 0h1.500v7H0zM6.500 0v7L2.500 3.500z" /></I></NavButton>
            <NavButton aria-label="Previous sheet"><I w={8} h={7}><path d="M6 0v7L2 3.500z" /></I></NavButton>
            <NavButton aria-label="Next sheet"><I w={8} h={7}><path d="M2 0v7l4-3.500z" /></I></NavButton>
            <NavButton aria-label="Last sheet"><I w={8} h={7}><path d="M6.500 0H8v7H6.500zM1.500 0v7l4-3.500z" /></I></NavButton>
            <Tabs>
              {tabs.map((t, i) => (
                <Tab key={t} $on={i === 0}>
                  <I w={i === 0 ? 65 : 62} h={16}>
                    <path d={i === 0 ? "M1 0l7 15.500h48L64 0z" : "M5 0l5 15.500h44L62 0z"} fill={i === 0 ? "#fff" : "#ece9d8"} />
                    <path d={i === 0 ? "M1 0l7 15.500h48L64 0" : "M3 8l4 7.500h46L61 0"} fill="none" stroke="#000" />
                  </I>
                  <span>{t}</span>
                </Tab>
              ))}
            </Tabs>
          </TabsPane>
          <Splitter />
          <ScrollTrack>
            <ScrollButton aria-label="Scroll left"><I w={8} h={8}><path d="M5.500 .5L2 4l3.500 3.500" fill="none" stroke="#4d6185" strokeWidth="2" /></I></ScrollButton>
            <Thumb><I w={8} h={7}><path d="M.5 0v6M2.500 0v6M4.500 0v6M6.500 0v6" stroke="#eef4fe" /><path d="M1.500 1v6M3.500 1v6M5.500 1v6M7.500 1v6" stroke="#8cb0f8" /></I></Thumb>
          </ScrollTrack>
        </SheetBar>
        <StatusBar>
          <Ready>Ready</Ready>
          <StatusBox $w={34} /><StatusBox $w={113} /><StatusBox $w={25} /><StatusBox $w={29} />
          <StatusBox $w={23}>NUM</StatusBox>
        </StatusBar>

        <Dialog role="dialog" aria-label="Conditional Formatting">
          <DialogTitle>
            Conditional Formatting
            <Close aria-label="Close"><I w={11} h={11}><path d="M1 1l9 9M10 1l-9 9" stroke="#fff" strokeWidth="2" /></I></Close>
          </DialogTitle>
          <DialogBody>
            <Condition n={1} op="equal to" value="1" color="#00ff00" />
            <Condition n={2} op="greater than" value="2" color="#ff0000" focus />
            <Actions>
              <Push type="button"><u>A</u>dd &gt;&gt;</Push>
              <Push type="button"><u>D</u>elete...</Push>
              <Confirm type="button">OK</Confirm>
              <Push type="button">Cancel</Push>
            </Actions>
          </DialogBody>
        </Dialog>
      </Win>

      <TaskBar>
        <Start>
          <I w={19} h={18}>
            <path d="M3 3.500c2-1.500 4-1.500 6 0L7.500 9c-2-1.300-4-1.300-6 0z" fill="#f0602c" />
            <path d="M10 4c2 1.300 4.500 1.300 7 0l-1.500 5.500c-2.500 1.300-4.500 1.300-7 0z" fill="#84c83c" />
            <path d="M1.200 10c2-1.300 4-1.300 6 0L5.700 15.500c-2-1.300-4-1.300-6 0z" fill="#5a9cf0" />
            <path d="M8.200 10.500c2.500 1.300 4.500 1.300 7 0L13.700 16c-2.500 1.300-4.500 1.300-7 0z" fill="#fbcc3c" />
          </I>
          start
        </Start>
        <Task><Clock />Inbox - Microsoft Out...</Task>
        <Task $on><ExcelIcon />Microsoft Excel - Book1</Task>
        <Task>
          <I><path d="M4 6h8l-1 8c-1 2-5 2-6 0z" fill="#cdd8d0" stroke="#55645a" strokeWidth=".8" /><path d="M6 7L3 1" stroke="#3c3c3c" strokeWidth="2" /><path d="M8 7V2" stroke="#e0b030" strokeWidth="2" /><path d="M10 7l3-5" stroke="#c87828" strokeWidth="2" /><path d="M7 9v5" stroke="#58a848" strokeWidth="2" /><path d="M9.500 8v4" stroke="#e06040" strokeWidth="2" /></I>
          CF1 - Paint
        </Task>
        <Lang>
          <LangButton aria-label="Microphone"><I><path d="M3 11l7-8 3 3-8 7z" fill="#888" stroke="#111" /><circle cx="11.500" cy="4" r="2.700" fill="#ddd" stroke="#222" /><path d="M3 12c-2 2 1 3 3 2" fill="none" stroke="#111" /></I></LangButton>
          <LangButton aria-label="Speech tools"><I><rect x="1" y="2" width="14" height="10" fill="#fff" stroke="#111" strokeWidth=".7" /><path d="M1 2h14v2H1z" fill="#1830b0" /><path d="M3 6.500h4M3 8.500h3" stroke="#222" /><path d="M7 13l5-6" stroke="#222" strokeWidth="2" /><circle cx="12" cy="7" r="2" fill="#ccc" stroke="#222" /></I></LangButton>
          <LangButton aria-label="Handwriting"><I><path d="M4 10l7-8 1 1-5 8z" fill="#f0d860" stroke="#111" /><path d="M2 13.500h8M4 10l3 1 4 1v2" stroke="#fff" strokeWidth="1.500" fill="none" /><path d="M1 14.500h10" stroke="#000" /><path d="M12 11h3v3h-3z" fill="#1030c0" /></I></LangButton>
          <LangButton $on aria-label="Drawing pad"><I><path d="M1 5l4-4 4 4z" fill="#bfe4e4" stroke="#111" strokeWidth=".8" /><circle cx="5" cy="11" r="3" fill="#fff" stroke="#333" strokeWidth=".8" /><path d="M9 11l5-8M14 3c2 0 1 2 0 4" stroke="#111" strokeWidth="1.600" fill="none" /><path d="M8 13c2 2 4 1 5 0" stroke="#111" fill="none" /></I></LangButton>
        </Lang>
        <Tray>
          <TrayButton aria-label="Show hidden icons"><I w={18} h={18}><circle cx="9" cy="9" r="8.500" fill="#2484ea" stroke="#7cc0fa" /><path d="M11 4.500L6.500 9l4.500 4.500" fill="none" stroke="#fff" strokeWidth="2" /></I></TrayButton>
          <TrayButton aria-label="Outlook"><Clock /></TrayButton>
          <TrayButton aria-label="Network"><I><circle cx="5" cy="5" r="4" fill="#e4e4ea" stroke="#8890a0" strokeWidth=".8" /><circle cx="7" cy="10" r="3" fill="#c8ccd8" /><path d="M11 6l4 4-4 4-4-4z" fill="#1c30c0" /></I></TrayButton>
        </Tray>
      </TaskBar>
    </Desktop>
  );
}
